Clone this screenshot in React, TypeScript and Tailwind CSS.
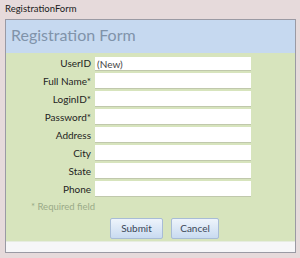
import React from 'react';

const fields = [
  { label: 'UserID', value: '(New)' },
  { label: 'Full Name*', value: '' },
  { label: 'LoginID*', value: '' },
  { label: 'Password*', value: '' },
  { label: 'Address', value: '' },
  { label: 'City', value: '' },
  { label: 'State', value: '' },
  { label: 'Phone', value: '' },
];

export default function App() {
  return (
    <div
      className="w-[300px] h-[258px] bg-[#e6dadb] flex flex-col text-[#222]"
      style={{ fontFamily: 'Lato, "Open Sans", sans-serif' }}
    >
      <div className="h-[19px] pl-[5px] pt-[3px] text-[9.5px] leading-[12px] text-[#1a1a1a]">RegistrationForm</div>
      <div className="ml-[5px] w-[291px] h-[234px] border border-[#9a9aa4] flex flex-col">
        {/* Header */}
        <div className="h-[33px] bg-[#c6d9f0] pl-[5px] pt-[4px] text-[16px] leading-[22px] text-[#8093aa]">
          Registration Form
        </div>
        {/* Body */}
        <div className="flex-1 bg-[#d7e4bd] flex flex-col pt-[3px]">
          <div className="flex flex-col gap-[2px]">
            {fields.map((f, i) => (
              <div key={f.label} className="flex items-center">
                <div className="w-[89px] text-right pr-[4px] text-[10px] text-[#1e1e1e]">{f.label}</div>
                <div
                  className={`w-[156px] ${i === 0 ? 'h-[14px]' : 'h-[16px]'} bg-white border-b border-[#c0c8ac] px-[2px] text-[10px] leading-[14px] text-[#444]`}
                >
                  {f.value}
                </div>
              </div>
            ))}
          </div>
          <div className="pl-[25px] mt-[3px] text-[9.5px] text-[#9aaa88]">* Required field</div>
          <div className="flex gap-[8px] pl-[104px] mt-[4px]">
            <button className="w-[53px] h-[21px] rounded-[2px] border border-[#a8bcd6] bg-gradient-to-b from-[#eef4fb] to-[#c9dbf1] text-[10px] text-[#3a4656]">
              Submit
            </button>
            <button className="w-[48px] h-[21px] rounded-[2px] border border-[#a8bcd6] bg-gradient-to-b from-[#eef4fb] to-[#c9dbf1] text-[10px] text-[#3a4656]">
              Cancel
            </button>
          </div>
        </div>
        <div className="h-[11px] bg-[#f6f6f8] border-t border-[#e6ece0]" />
      </div>
    </div>
  );
}
